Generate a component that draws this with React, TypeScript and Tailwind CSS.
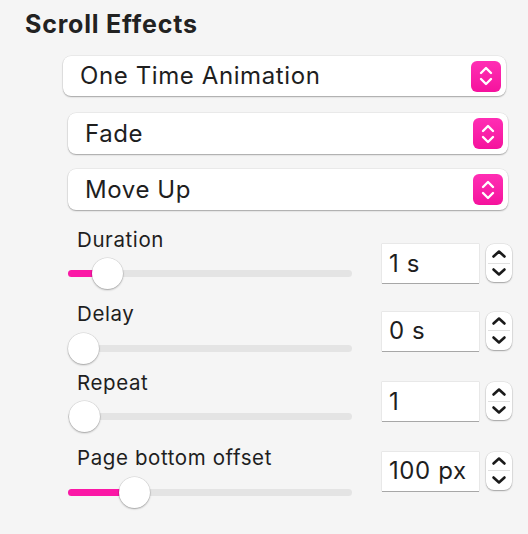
import React from "react";

const PINK = "#fb18a6";

function SelectBox({ label, cls }: { label: string; cls: string }) {
  return (
    <div
      className={`flex items-center justify-between bg-white rounded-[8px] shadow-[0_1px_1.5px_rgba(0,0,0,0.3),0_0_0_0.5px_rgba(0,0,0,0.08)] ${cls}`}
    >
      <span className="pl-[17px] text-[24px] leading-[28px] tracking-[0.6px] text-[#1e1e1e]">{label}</span>
      <div className="mr-[5px] w-[30px] h-[31px] rounded-[6px] bg-gradient-to-b from-[#ff2db4] to-[#f5119d] flex items-center justify-center">
        <svg width="16" height="24" viewBox="0 0 16 24" fill="none">
          <path d="M3 9 L8 4 L13 9" stroke="white" strokeWidth="2.4" strokeLinecap="round" strokeLinejoin="round" />
          <path d="M3 15 L8 20 L13 15" stroke="white" strokeWidth="2.4" strokeLinecap="round" strokeLinejoin="round" />
        </svg>
      </div>
    </div>
  );
}

function Stepper() {
  return (
    <div className="w-[26px] h-[38px] bg-white rounded-[8px] shadow-[0_1px_1.5px_rgba(0,0,0,0.3),0_0_0_0.5px_rgba(0,0,0,0.1)] flex flex-col">
      <div className="flex-1 flex items-center justify-center">
        <svg width="16" height="11" viewBox="0 0 16 11" fill="none">
          <path d="M2.5 8.5 L8 3.5 L13.5 8.5" stroke="#1a1a1a" strokeWidth="2.6" strokeLinecap="round" strokeLinejoin="round" />
        </svg>
      </div>
      <div className="h-px bg-[#e0e0e0] mx-[2px]" />
      <div className="flex-1 flex items-center justify-center">
        <svg width="16" height="11" viewBox="0 0 16 11" fill="none">
          <path d="M2.5 2.5 L8 7.5 L13.5 2.5" stroke="#1a1a1a" strokeWidth="2.6" strokeLinecap="round" strokeLinejoin="round" />
        </svg>
      </div>
    </div>
  );
}

function SliderRow({
  label,
  value,
  thumb,
  cls,
  inputCls,
}: {
  label: string;
  value: string;
  thumb: number;
  cls: string;
  inputCls: string;
}) {
  return (
    <div className={`flex items-start pl-[68px] ${cls}`}>
      <div className="w-[284px] flex flex-col">
        <div className="pl-[9px] h-[22px] text-[20.5px] leading-[22px] tracking-[0.6px] text-[#1e1e1e] whitespace-nowrap">
          {label}
        </div>
        <div className="relative mt-[7px] h-[32px]">
          <div className="absolute left-0 right-0 top-[12.5px] h-[7px] rounded-full bg-[#e4e4e4]" />
          {thumb > 17 && (
            <div
              className="absolute left-0 top-[12.5px] h-[7px] rounded-full"
              style={{ width: thumb, background: PINK }}
            />
          )}
          <div
            className="absolute top-[0.5px] w-[31px] h-[31px] rounded-full bg-white shadow-[0_1px_2px_rgba(0,0,0,0.3),0_0_0_0.5px_rgba(0,0,0,0.12)]"
            style={{ left: thumb - 15.5 }}
          />
        </div>
      </div>
      <div className={`ml-[30px] flex items-start gap-[7px] ${inputCls}`}>
        <div className="w-[97px] h-[39px] bg-white shadow-[0_1px_0_rgba(0,0,0,0.28),0_0_0_0.5px_rgba(0,0,0,0.1)] flex items-center pl-[7px] text-[24px] tracking-[0.6px] text-[#1e1e1e] whitespace-nowrap">
          {value}
        </div>
        <Stepper />
      </div>
    </div>
  );
}

export default function App() {
  return (
    <div className="w-[528px] h-[534px] bg-[#f5f5f5] overflow-hidden font-['Inter',sans-serif] text-[#222]">
      <h2 className="pl-[25px] pt-[10px] text-[25px] leading-[28px] tracking-[0.8px] font-bold text-[#222]">
        Scroll Effects
      </h2>
      <SelectBox label="One Time Animation" cls="mt-[18px] ml-[63px] w-[443px] h-[40px]" />
      <SelectBox label="Fade" cls="mt-[17px] ml-[68px] w-[440px] h-[41px]" />
      <SelectBox label="Move Up" cls="mt-[15px] ml-[68px] w-[440px] h-[41px]" />
      <SliderRow label="Duration" value="1 s" thumb={39} cls="mt-[18.5px]" inputCls="mt-[15.5px]" />
      <SliderRow label="Delay" value="0 s" thumb={15.5} cls="mt-[13.5px]" inputCls="mt-[8.5px]" />
      <SliderRow label="Repeat" value="1" thumb={16} cls="mt-[7.5px]" inputCls="mt-[10.5px]" />
      <SliderRow label="Page bottom offset" value="100 px" thumb={66} cls="mt-[14.5px]" inputCls="mt-[4.5px]" />
    </div>
  );
}
